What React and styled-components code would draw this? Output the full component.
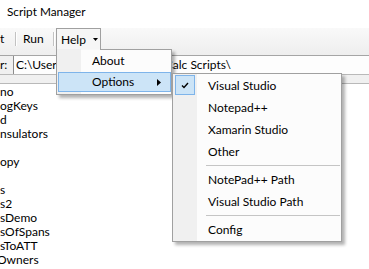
import styled, { createGlobalStyle } from "styled-components"

const GlobalStyle = createGlobalStyle`
	html, body {
		margin: 0;
		padding: 0;
	}
	body {
		width: 369px;
		height: 269px;
		overflow: hidden;
		background: #fff;
		color: #000;
		font-family: "Segoe UI", Lato, "Noto Sans", sans-serif;
		font-size: 12px;
	}
`

const Window = styled.div`
	display: flex;
	flex-direction: column;
	width: 369px;
	height: 269px;
	overflow: hidden;
`

const TitleBar = styled.div`
	display: flex;
	align-items: center;
	box-sizing: border-box;
	height: 28px;
	padding: 0 0 4px 7px;
	font-size: 11.8px;
	line-height: 1;
	background: #fff;
`

const MenuStrip = styled.div`
	display: flex;
	align-items: flex-start;
	box-sizing: border-box;
	height: 28px;
	background: linear-gradient(#f9f9f9, #eeeeee);
	border-bottom: 1px solid #a5a5a5;
`

const MenuText = styled.div`
	display: flex;
	align-items: center;
	box-sizing: border-box;
	width: ${(p) => p.$width}px;
	height: 21px;
	padding-left: ${(p) => p.$pad || 0}px;
	line-height: 1;
`

const Separator = styled.div`
	width: 1px;
	height: 14px;
	margin: 4px 1px 0 ${(p) => p.$gap || 0}px;
	background: #c2c2c2;
	border-right: 1px solid #fff;
`

const HelpButton = styled.div`
	position: relative;
	display: flex;
	align-items: center;
	gap: 7px;
	box-sizing: border-box;
	width: 45px;
	height: 21px;
	padding-left: 4px;
	border: 1px solid #a0a0a0;
	border-bottom: none;
	background: #f6f6f6;
	z-index: 2;
`

const Dropdown = styled.div`
	position: absolute;
	top: 20px;
	left: -1px;
	box-sizing: border-box;
	width: 116px;
	border: 1px solid #a0a0a0;
	background: linear-gradient(to right, #f0f0f0 24px, #fcfcfc 24px);
	box-shadow: 3px 3px 3px rgba(0, 0, 0, 0.3);

	&::before {
		content: "";
		position: absolute;
		top: -1px;
		left: 0;
		width: 43px;
		height: 1px;
		background: linear-gradient(to right, #f0f0f0 24px, #f8f8f8 24px);
	}
`

const Submenu = styled.div`
	position: absolute;
	top: 23px;
	left: 115px;
	box-sizing: border-box;
	width: 170px;
	padding-top: 1px;
	border: 1px solid #a0a0a0;
	background: linear-gradient(to right, #f0f0f0 24px, #fcfcfc 24px);
	box-shadow: 3px 3px 3px rgba(0, 0, 0, 0.3);
`

const MenuItem = styled.div`
	position: relative;
	display: flex;
	align-items: center;
	box-sizing: border-box;
	height: ${(p) => (p.$active ? 20 : 22)}px;
	margin: ${(p) => (p.$active ? "0 0 2px 1px" : "0")};
	padding-left: ${(p) => (p.$active ? 33 : 35)}px;
	border: ${(p) => (p.$active ? "1px solid #7eb4ea" : "none")};
	background: ${(p) => (p.$active ? "#cce4f7" : "transparent")};
	line-height: 1;
	white-space: nowrap;
`

const Arrow = styled.svg`
	margin-left: auto;
	margin-right: 9px;
`

const CheckBox = styled.div`
	position: absolute;
	top: 0;
	left: 2px;
	display: flex;
	align-items: center;
	justify-content: center;
	box-sizing: border-box;
	width: 20px;
	height: 20px;
	border: 1px solid #7eb4ea;
	background: #cce4f7;
`

const MenuRule = styled.div`
	height: 6px;
	margin: 0 1px 0 33px;
	background: linear-gradient(#c5c5c5, #c5c5c5) 0 2px / 100% 1px no-repeat;
`

const PathRow = styled.div`
	display: flex;
	align-items: stretch;
	height: 18px;
	background: #f0f0f0;
`

const PathLabel = styled.div`
	display: flex;
	align-items: center;
	width: 13px;
	line-height: 1;
`

const PathBox = styled.div`
	flex: 1;
	display: flex;
	align-items: center;
	padding-left: 2px;
	border-left: 1px solid #8c8c8c;
	background: #fdfdfd;
	line-height: 1;
	white-space: nowrap;
	overflow: hidden;
`

const Band = styled.div`
	height: 8px;
	border-top: 1px solid #b9b9b9;
	border-bottom: 1px solid #b9b9b9;
	background: #f0f0f0;
`

const List = styled.div`
	display: flex;
	flex-direction: column;
	padding-top: 1px;
	background: #fff;
	overflow: hidden;
`

const ListItem = styled.div`
	height: 14px;
	line-height: 14px;
	margin-left: ${(p) => p.$shift || 0}px;
	white-space: nowrap;
`

const editors = ["Visual Studio", "Notepad++", "Xamarin Studio", "Other"]
const paths = ["NotePad++ Path", "Visual Studio Path"]
const scripts = [
	"no",
	"ogKeys",
	"d",
	"nsulators",
	"\u00a0",
	"opy",
	"\u00a0",
	"s",
	"s2",
	"sDemo",
	"sOfSpans",
	"sToATT",
]

export default function App() {
	return (
		<Window>
			<GlobalStyle />
			<TitleBar>Script Manager</TitleBar>
			<MenuStrip>
				<MenuText $width={14}>t</MenuText>
				<Separator $gap={1} />
				<MenuText $width={35} $pad={5}>Run</MenuText>
				<Separator />
				<HelpButton>
					Help
					<svg width="5" height="3" viewBox="0 0 5 3">
						<polygon points="0,0 5,0 2.5,3" fill="#000" />
					</svg>
					<Dropdown>
						<MenuItem>About</MenuItem>
						<MenuItem $active>
							Options
							<Arrow width="4" height="7" viewBox="0 0 4 7">
								<polygon points="0,0 4,3.5 0,7" fill="#000" />
							</Arrow>
						</MenuItem>
						<Submenu>
							{editors.map((name, index) => (
								<MenuItem key={name}>
									{index === 0 && (
										<CheckBox>
											<svg width="8" height="7" viewBox="0 0 8 7">
												<path d="M1 3.5 L3 5.5 L7 1" stroke="#000" strokeWidth="1.4" fill="none" />
											</svg>
										</CheckBox>
									)}
									{name}
								</MenuItem>
							))}
							<MenuRule />
							{paths.map((name) => (
								<MenuItem key={name}>{name}</MenuItem>
							))}
							<MenuRule />
							<MenuItem>Config</MenuItem>
						</Submenu>
					</Dropdown>
				</HelpButton>
			</MenuStrip>
			<PathRow>
				<PathLabel>r:</PathLabel>
				<PathBox>C:\Users\Anna\Documents\Calc Scripts\</PathBox>
			</PathRow>
			<Band />
			<List>
				{scripts.map((name, index) => (
					<ListItem key={`script-${index}`}>{name}</ListItem>
				))}
				<ListItem $shift={-3}>Owners</ListItem>
			</List>
		</Window>
	)
}
